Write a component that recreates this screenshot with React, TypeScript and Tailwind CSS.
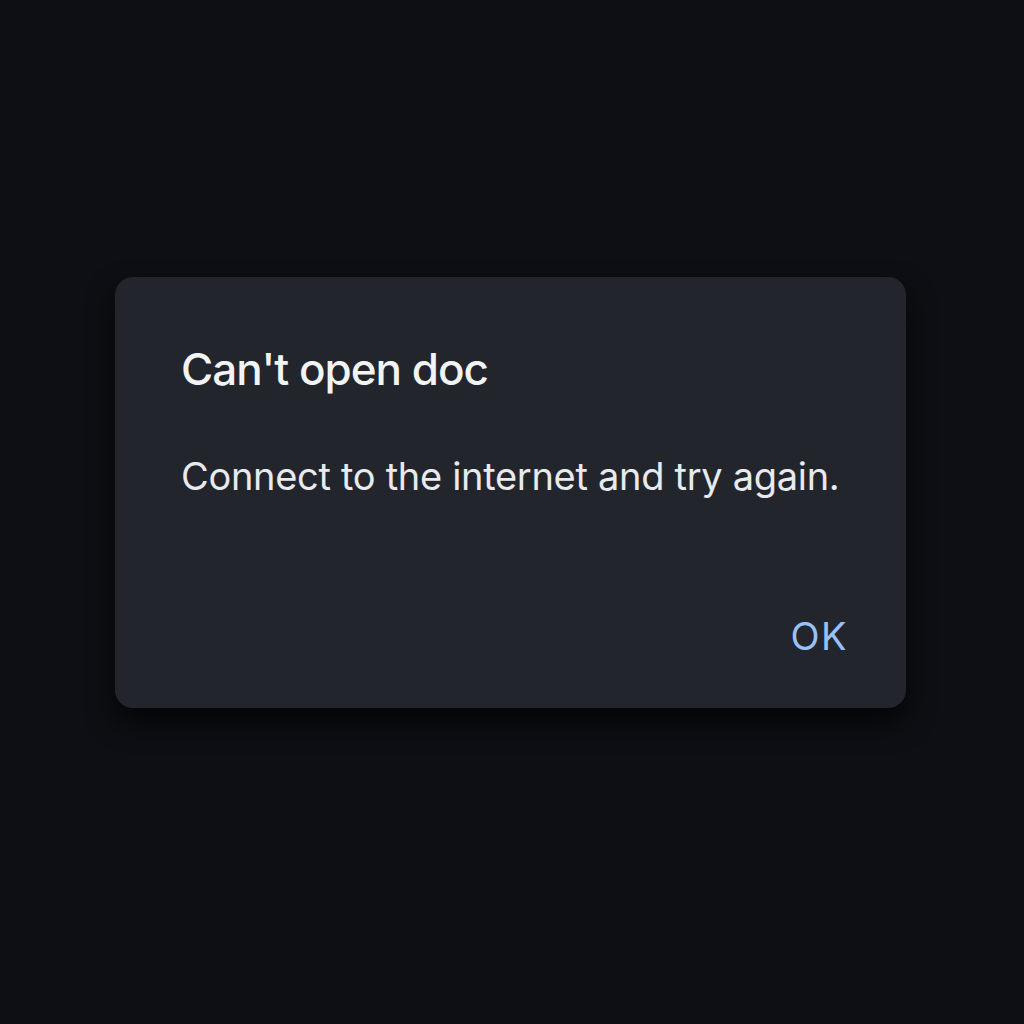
export default function App() {
  return (
    <div className="w-[1024px] h-[1024px] bg-[#0d0f14] pt-[277px] pl-[115px]" style={{ fontFamily: 'Inter, "Open Sans", sans-serif' }}>
      <div className="w-[791px] h-[431px] rounded-[18px] bg-[#22252c] shadow-[0_14px_28px_rgba(0,0,0,0.7)] flex flex-col px-[66px] pt-[70px] pb-[53px]">
        <h1 className="text-[44px] leading-[44px] font-medium text-[#f1f3f4] tracking-[-1px]">Can't open doc</h1>
        <p className="mt-[66px] text-[38px] leading-[38px] text-[#e8eaed] tracking-[-0.3px]">Connect to the internet and try again.</p>
        <div className="mt-auto flex justify-end">
          <button className="text-[38px] leading-[38px] text-[#99c1f9] tracking-[1.5px] mr-[-8px]">OK</button>
        </div>
      </div>
    </div>
  )
}
